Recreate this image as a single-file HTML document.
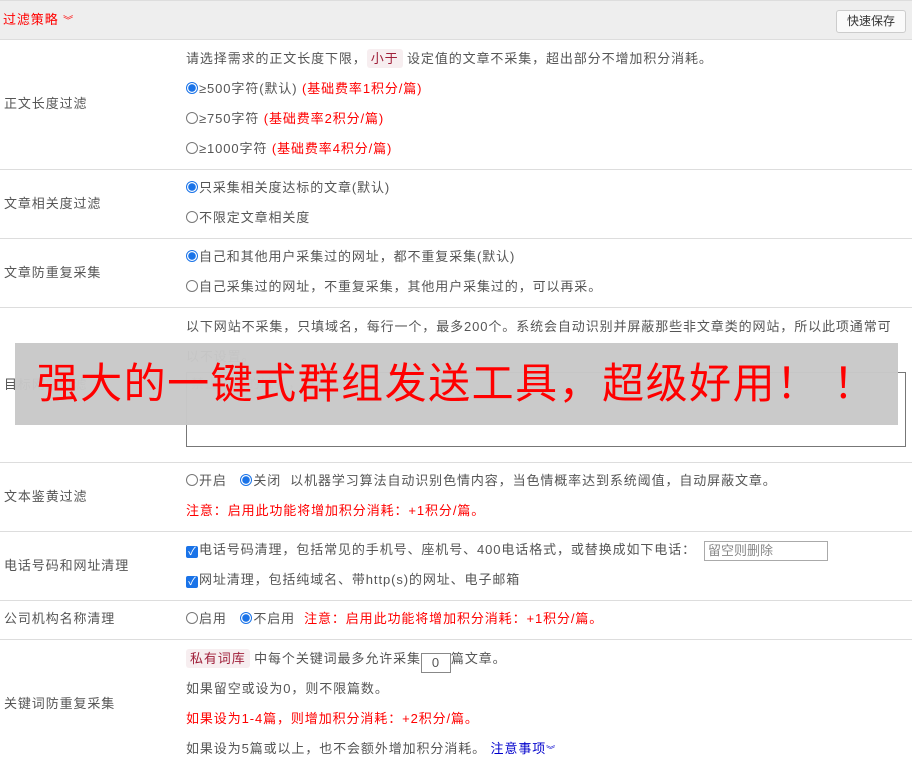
<!DOCTYPE html>
<html><head><meta charset="utf-8"><style>
*{margin:0;padding:0;box-sizing:border-box}
body{width:912px;height:768px;overflow:hidden;background:#fff;font-family:"Liberation Sans","Noto Sans CJK SC",sans-serif;font-size:13px;color:#555;position:relative}
.a{position:absolute;white-space:nowrap;line-height:18px;letter-spacing:0.9px}
.hr{position:absolute;left:0;width:912px;height:1px;background:#ddd}
.r{color:#f00}
.rad{display:inline-block;width:12px;height:12px;border:1px solid #777;border-radius:50%;vertical-align:-1px;margin-right:1px}
.on{border:1px solid #1a73e8;background:radial-gradient(circle,#1a73e8 3.5px,#fff 4px)}
.cb{display:inline-block;width:12px;height:12px;background:#1a73e8;border-radius:2px;vertical-align:-1px;color:#fff;font-size:11px;line-height:12px;text-align:center;margin-right:1px;letter-spacing:0}
.tag{background:#f7eef0;color:#a0203a;padding:2px 4px;border-radius:3px}
</style></head><body>
<div style="position:absolute;left:0;top:0;width:912px;height:40px;background:#eee;border-top:1px solid #ddd;border-bottom:1px solid #ddd"></div>
<div class="a r" style="left:3px;top:11px">过滤策略 <span style="font-size:10px">︾</span></div>
<div class="a" style="left:836px;top:10px;width:70px;height:23px;border:1px solid #ccc;border-radius:3px;background:#fafafa;color:#333;font-size:12px;line-height:21px;text-align:center;letter-spacing:0">快速保存</div>

<div class="a" style="left:4px;top:95px">正文长度过滤</div>
<div class="a" style="left:186px;top:50px">请选择需求的正文长度下限，<span class="tag">小于</span> 设定值的文章不采集，超出部分不增加积分消耗。</div>
<div class="a" style="left:186px;top:80px"><span class="rad on"></span>≥500字符(默认) <span class="r">(基础费率1积分/篇)</span></div>
<div class="a" style="left:186px;top:110px"><span class="rad"></span>≥750字符 <span class="r">(基础费率2积分/篇)</span></div>
<div class="a" style="left:186px;top:140px"><span class="rad"></span>≥1000字符 <span class="r">(基础费率4积分/篇)</span></div>
<div class="hr" style="top:169px"></div>

<div class="a" style="left:4px;top:195px">文章相关度过滤</div>
<div class="a" style="left:186px;top:179px"><span class="rad on"></span>只采集相关度达标的文章(默认)</div>
<div class="a" style="left:186px;top:209px"><span class="rad"></span>不限定文章相关度</div>
<div class="hr" style="top:238px"></div>

<div class="a" style="left:4px;top:264px">文章防重复采集</div>
<div class="a" style="left:186px;top:248px"><span class="rad on"></span>自己和其他用户采集过的网址，都不重复采集(默认)</div>
<div class="a" style="left:186px;top:278px"><span class="rad"></span>自己采集过的网址，不重复采集，其他用户采集过的，可以再采。</div>
<div class="hr" style="top:307px"></div>

<div class="a" style="left:4px;top:376px">目标网站过滤</div>
<div class="a" style="left:186px;top:318px">以下网站不采集，只填域名，每行一个，最多200个。系统会自动识别并屏蔽那些非文章类的网站，所以此项通常可</div>
<div class="a" style="left:186px;top:348px">以不设置。</div>
<div class="a" style="left:186px;top:372px;width:720px;height:75px;border:1px solid #777;padding:2px 4px;color:#999">禁止采集的域名，每行一个</div>
<div style="position:absolute;left:15px;top:343px;width:883px;height:82px;background:rgba(200,200,200,0.97)"></div>
<div class="a" style="left:15px;top:343px;width:883px;height:82px;line-height:82px;text-align:center;color:#f00;font-size:42px;letter-spacing:1.5px">强大的一键式群组发送工具，超级好用！ ！</div>
<div class="hr" style="top:462px"></div>

<div class="a" style="left:4px;top:488px">文本鉴黄过滤</div>
<div class="a" style="left:186px;top:472px"><span class="rad"></span>开启 &nbsp;&nbsp;<span class="rad on"></span>关闭 &nbsp;以机器学习算法自动识别色情内容，当色情概率达到系统阈值，自动屏蔽文章。</div>
<div class="a r" style="left:186px;top:502px">注意：启用此功能将增加积分消耗：+1积分/篇。</div>
<div class="hr" style="top:531px"></div>

<div class="a" style="left:4px;top:557px">电话号码和网址清理</div>
<div class="a" style="left:186px;top:541px"><span class="cb">✓</span>电话号码清理，包括常见的手机号、座机号、400电话格式，或替换成如下电话：</div>
<div class="a" style="left:704px;top:541px;width:124px;height:20px;border:1px solid #aaa;padding-left:3px;color:#888;letter-spacing:0">留空则删除</div>
<div class="a" style="left:186px;top:571px"><span class="cb">✓</span>网址清理，包括纯域名、带http(s)的网址、电子邮箱</div>
<div class="hr" style="top:600px"></div>

<div class="a" style="left:4px;top:610px">公司机构名称清理</div>
<div class="a" style="left:186px;top:610px"><span class="rad"></span>启用 &nbsp;&nbsp;<span class="rad on"></span>不启用 &nbsp;<span class="r">注意：启用此功能将增加积分消耗：+1积分/篇。</span></div>
<div class="hr" style="top:639px"></div>

<div class="a" style="left:4px;top:695px">关键词防重复采集</div>
<div class="a" style="left:186px;top:650px"><span class="tag">私有词库</span> 中每个关键词最多允许采集<span style="display:inline-block;width:30px;height:20px;border:1px solid #888;text-align:center;line-height:18px;vertical-align:-4px">0</span>篇文章。</div>
<div class="a" style="left:186px;top:680px">如果留空或设为0，则不限篇数。</div>
<div class="a r" style="left:186px;top:710px">如果设为1-4篇，则增加积分消耗：+2积分/篇。</div>
<div class="a" style="left:186px;top:740px">如果设为5篇或以上，也不会额外增加积分消耗。 <span style="color:#00c">注意事项<span style="font-size:9px">︾</span></span></div>
</body></html>
